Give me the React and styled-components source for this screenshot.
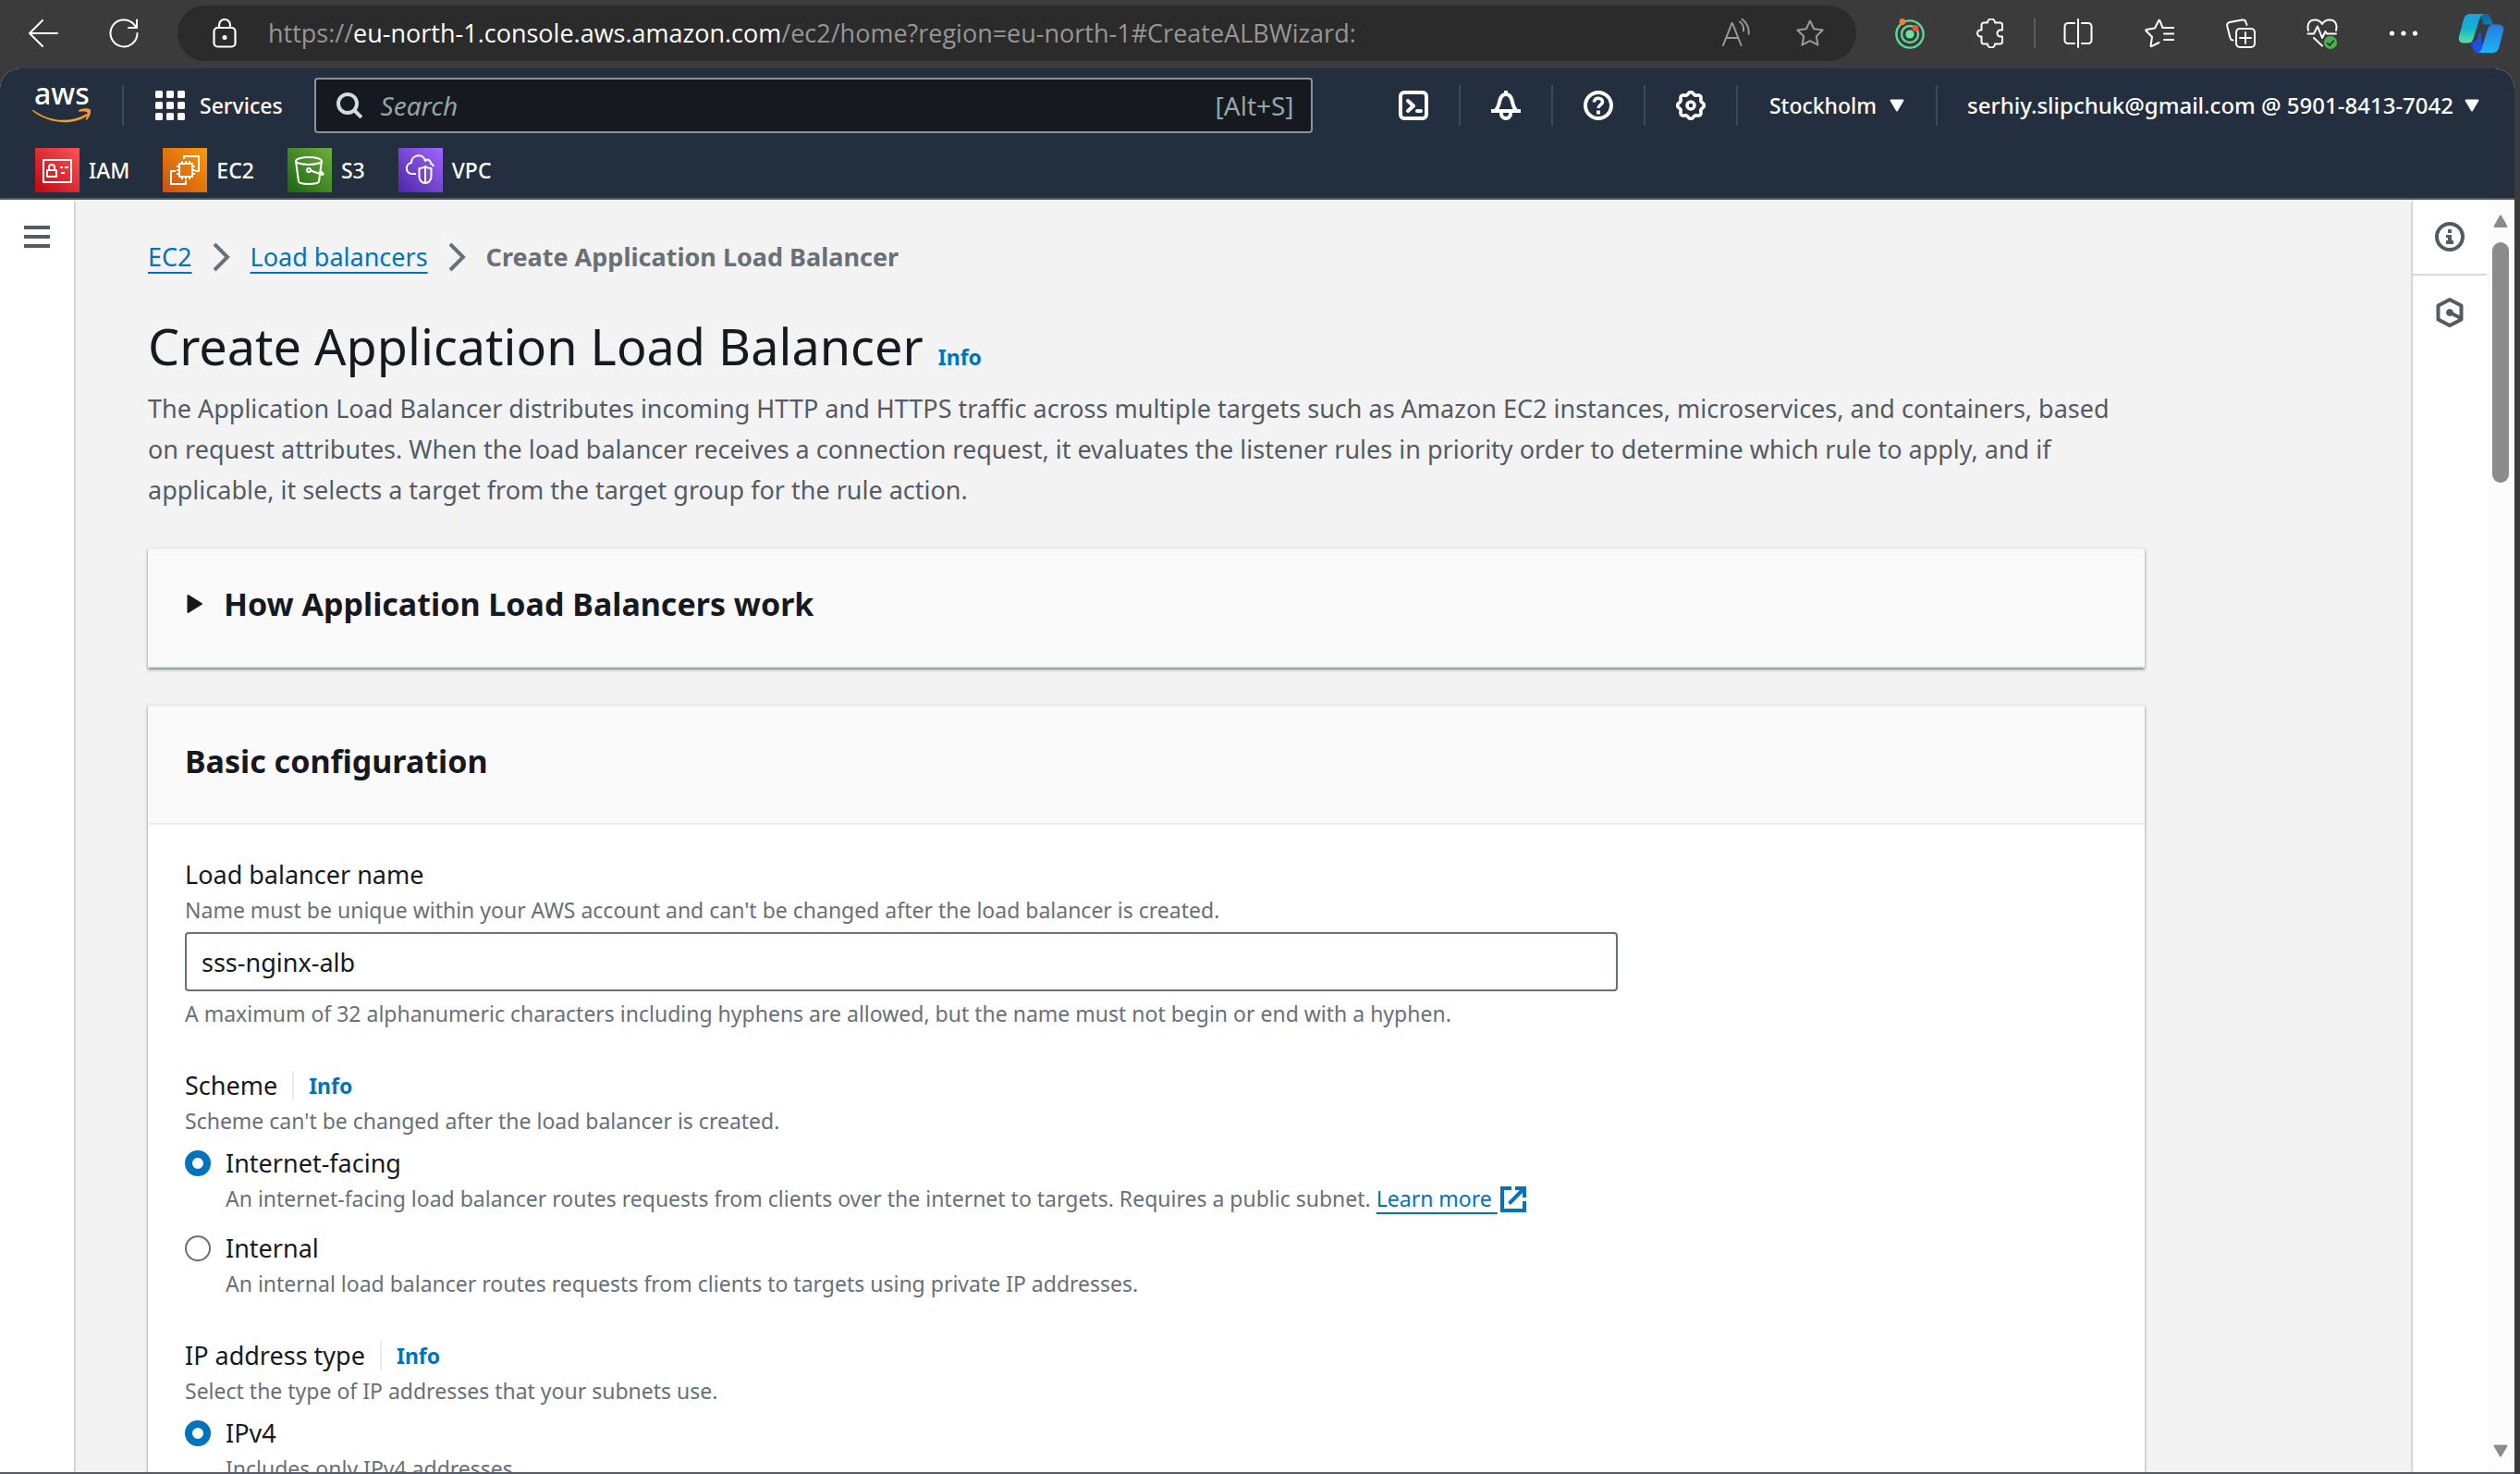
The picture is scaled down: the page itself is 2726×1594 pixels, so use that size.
import React, { useState } from "react";
import styled, { createGlobalStyle, css } from "styled-components";

const FONT = '"Noto Sans", "Open Sans", sans-serif';

const GlobalStyle = createGlobalStyle`
  *, *::before, *::after { box-sizing: border-box; }
  body { margin: 0; background: #3b3b3b; font-family: ${FONT}; overflow: hidden; }
  button, input { font-family: inherit; }
  h1, h2, p, ul, ol, fieldset, legend { margin: 0; padding: 0; border: 0; }
`;

/* ---------- Browser chrome ---------- */

const Shell = styled.div`
  height: 100vh;
  display: flex;
  flex-direction: column;
  background: #3b3b3b;
`;

const BrowserBar = styled.div`
  flex: none;
  display: flex;
  align-items: center;
  height: 74px;
  padding: 0 2px 2px 18px;
`;

const PlainButton = styled.button`
  display: flex;
  align-items: center;
  justify-content: center;
  padding: 0;
  border: 0;
  background: none;
  color: inherit;
  cursor: pointer;
`;

const ToolButton = styled(PlainButton)`
  flex: none;
  width: ${(p) => p.$w || 88}px;
  height: 60px;
  color: ${(p) => (p.$dim ? "#9a9a9a" : "#fff")};
`;

const AddressBar = styled.div`
  flex: 1;
  min-width: 0;
  display: flex;
  align-items: center;
  height: 60px;
  margin-right: 14px;
  padding: 0 10px 0 38px;
  border-radius: 30px;
  background: #2b2b2b;
  color: #fff;
`;

const Url = styled.div`
  flex: 1;
  min-width: 0;
  padding-left: 34px;
  overflow: hidden;
  white-space: nowrap;
  font-family: "Open Sans", "Noto Sans", sans-serif;
  font-size: 27px;
  line-height: 40px;
  color: #969696;
  b { color: #fff; font-weight: 400; }
`;

const BarDivider = styled.div`
  flex: none;
  width: 2px;
  height: 32px;
  margin: 0 2px;
  background: #5c5c5c;
`;

const Viewport = styled.div`
  flex: 1;
  min-height: 0;
  display: flex;
  flex-direction: column;
  margin-right: 6px;
  overflow: hidden;
  border-radius: 22px 22px 0 0;
  border-bottom: 2px solid #545b64;
  background: #f3f3f3;
`;

/* ---------- Console header ---------- */

const ConsoleHeader = styled.header`
  flex: none;
  background: #232f3e;
  border-bottom: 2px solid #545b64;
  color: #fff;
  font-size: 23px;
  line-height: 32px;
`;

const NavRow = styled.nav`
  display: flex;
  align-items: center;
  height: 80px;
  padding: 0 38px 0 34px;
`;

const NavDivider = styled.div`
  flex: none;
  width: 2px;
  height: 44px;
  background: #3e4856;
`;

const Logo = styled.a`
  flex: none;
  display: block;
  width: 98px;
  height: 72px;
`;

const NavButton = styled(PlainButton)`
  flex: none;
  gap: ${(p) => p.$gap || 14}px;
  height: 60px;
  padding: ${(p) => p.$pad || "0 34px"};
  font-size: ${(p) => p.$size || 23}px;
  font-weight: 500;
  line-height: 32px;
  white-space: nowrap;
`;

const SearchBox = styled.label`
  flex: 0 1 1080px;
  display: flex;
  align-items: center;
  height: 60px;
  margin-right: auto;
  padding: 0 18px 0 22px;
  border: 2px solid #879596;
  border-radius: 4px;
  background: #16191f;
  color: #95a5a6;
  font-size: 28px;
`;

const SearchInput = styled.input`
  flex: 1;
  min-width: 0;
  padding: 0 0 0 20px;
  border: 0;
  outline: 0;
  background: none;
  color: #fff;
  font-size: 28px;
  &::placeholder { color: #95a5a6; font-style: italic; opacity: 1; }
`;

const IconNavButton = styled(PlainButton)`
  flex: none;
  width: 98px;
  height: 60px;
`;

const Favourites = styled.ul`
  display: flex;
  gap: 36px;
  height: 60px;
  padding: 6px 38px 0;
  list-style: none;
`;

const Favourite = styled.a`
  display: flex;
  align-items: center;
  gap: 10px;
  height: 48px;
  color: #fff;
  font-weight: 500;
  text-decoration: none;
  svg { display: block; }
`;

/* ---------- Page frame ---------- */

const Frame = styled.div`
  flex: 1;
  min-height: 0;
  display: flex;
`;

const Rail = styled.aside`
  flex: none;
  width: ${(p) => p.$w}px;
  z-index: 1;
  background: #fff;
  box-shadow: 0 2px 3px rgba(0, 28, 36, 0.45);
`;

const RailButton = styled(PlainButton)`
  width: 100%;
  height: 80px;
  color: #545b64;
  & + & { border-top: 2px solid #d5dbdb; height: 82px; }
`;

const Main = styled.main`
  flex: 1;
  min-width: 0;
  padding: 40px 80px 0;
  overflow: hidden;
  background: #f3f3f3;
`;

const Column = styled.div`
  max-width: 2160px;
`;

const ScrollTrack = styled.div`
  flex: none;
  display: flex;
  flex-direction: column;
  align-items: center;
  width: 30px;
  padding: 16px 0;
  z-index: 2;
  background: #fcfcfc;
`;

const ScrollThumb = styled.div`
  width: 18px;
  height: 260px;
  margin: 16px 0 auto;
  border-radius: 9px;
  background: #8b8b8b;
`;

/* ---------- Content ---------- */

const Crumbs = styled.ol`
  display: flex;
  align-items: center;
  gap: 22px;
  list-style: none;
  font-size: 27px;
  line-height: 44px;
  color: #687078;
  li { display: flex; align-items: center; gap: 22px; }
  strong { font-weight: 700; }
`;

const linkStyle = css`
  color: #0073bb;
  text-decoration: underline;
  text-decoration-thickness: 2px;
  text-underline-offset: 6px;
`;

const Link = styled.a`
  ${linkStyle}
`;

const PageTitle = styled.div`
  display: flex;
  align-items: baseline;
  gap: 16px;
  padding-top: 34px;
`;

const H1 = styled.h1`
  font-size: 54px;
  font-weight: 400;
  line-height: 80px;
  color: #16191f;
`;

const InfoLink = styled.a`
  color: #0073bb;
  font-size: 23px;
  font-weight: 700;
  line-height: 32px;
  text-decoration: none;
`;

const Intro = styled.p`
  padding: 6px 20px 40px 0;
  font-size: 27px;
  line-height: 44px;
  color: #545b64;
`;

const Card = styled.section`
  margin-bottom: 40px;
  background: #fff;
  border-top: 2px solid #eaeded;
  box-shadow: 0 2px 3px rgba(0, 28, 36, 0.5);
`;

const CardHeader = styled.div`
  display: flex;
  align-items: center;
  height: 128px;
  padding: 0 40px 8px;
  background: #fafafa;
  border-bottom: 2px solid #eaeded;
`;

const CardTitle = styled.h2`
  font-size: 34px;
  font-weight: 700;
  line-height: 44px;
  color: #16191f;
`;

const ExpandButton = styled(PlainButton)`
  gap: 22px;
  padding-left: 2px;
  color: #16191f;
`;

const Form = styled.form`
  display: flex;
  flex-direction: column;
  gap: 40px;
  padding: 32px 40px 40px;
`;

const Field = styled.div`
  display: flex;
  flex-direction: column;
`;

const LabelRow = styled.div`
  display: flex;
  align-items: center;
  font-size: 27px;
  line-height: 44px;
  color: #16191f;
  ${InfoLink} {
    margin-left: 16px;
    padding-left: 16px;
    border-left: 2px solid #eaeded;
  }
`;

const Hint = styled.p`
  font-size: 23px;
  line-height: 32px;
  color: #687078;
`;

const TextInput = styled.input`
  width: calc(75% - 10px);
  height: 64px;
  margin: 8px 0;
  padding: 0 16px;
  border: 2px solid #687078;
  border-radius: 4px;
  outline: 0;
  background: #fff;
  color: #16191f;
  font-size: 27px;
`;

const Options = styled.div`
  display: flex;
  flex-direction: column;
  gap: 16px;
  padding-top: 8px;
`;

const Option = styled.label`
  display: grid;
  grid-template-columns: 28px 1fr;
  column-gap: 16px;
  align-items: center;
  font-size: 27px;
  line-height: 44px;
  color: #16191f;
  ${Hint} { grid-column: 2; }
`;

const Radio = styled.input`
  appearance: none;
  width: 28px;
  height: 28px;
  margin: 0;
  border: 2px solid #687078;
  border-radius: 50%;
  background: #fff;
  &:checked { border: 8px solid #0073bb; }
`;

const ExternalLink = styled.a`
  ${linkStyle}
  svg { vertical-align: -6px; margin-left: 3px; }
`;

/* ---------- Icons ---------- */

const Svg = ({ s = 32, w, h, box = 32, sw = 2, children, ...rest }) => (
  <svg width={w || s} height={h || s} viewBox={`0 0 ${box} ${box}`} fill="none" stroke="currentColor"
    strokeWidth={sw} strokeLinecap="round" strokeLinejoin="round" aria-hidden="true" {...rest}>
    {children}
  </svg>
);

const BackIcon = () => <Svg><path d="M31 16H1M15 2 1 16l14 14" /></Svg>;
const ReloadIcon = () => <Svg><path d="M30.500 16A14.500 14.500 0 1 1 26.300 5.700L30 10M30 1.500V10h-9" strokeLinejoin="miter" /></Svg>;
const LockIcon = () => (
  <Svg w={26} h={32} viewBox="0 0 26 32" sw={2.2}>
    <rect x="1.500" y="10" width="23" height="20.500" rx="4" /><path d="M7 10V7a6 6 0 0 1 12 0v3" />
    <circle cx="13" cy="20.500" r="1.400" fill="currentColor" />
  </Svg>
);
const ReadAloudIcon = () => (
  <Svg><path d="M2 29 11.500 5h.5l9.500 24M5.500 21H18M20 3.500c3 2 4.500 6 4 10M22.500.8c5 3.500 8 10 7 16" /></Svg>
);
const STAR = "M16 2.500l4.200 8.700 9.500 1.300-6.900 6.700 1.700 9.500-8.500-4.500-8.500 4.500 1.700-9.500-6.900-6.700 9.500-1.300z";
const StarIcon = () => <Svg><path d={STAR} /></Svg>;
const TargetIcon = () => (
  <svg width="32" height="34" viewBox="0 0 32 34" fill="none" aria-hidden="true">
    <circle cx="16" cy="18" r="14.600" stroke="#5fd896" strokeWidth="2.400" />
    <circle cx="16" cy="18" r="9" stroke="#5fd896" strokeWidth="2.400" />
    <circle cx="16" cy="18" r="4.600" fill="#69e69f" />
    <circle cx="8" cy="4.500" r="3.400" fill="#ef7d32" /><circle cx="22" cy="11.500" r="3.400" fill="#e9562f" />
  </svg>
);
const PuzzleIcon = () => (
  <Svg><path d="M12 4.500a4 4 0 0 1 8 0h5.500A2.500 2.500 0 0 1 28 7v5.500h-2a3.500 3.500 0 0 0 0 7h2V25a2.500 2.500 0 0 1-2.500 2.500H20a4 4 0 0 1-8 0H8A2.500 2.500 0 0 1 5.500 25v-5.500h-1a3.500 3.500 0 0 1 0-7h1V7A2.500 2.500 0 0 1 8 4.500z" /></Svg>
);
const SplitIcon = () => (
  <Svg><path d="M16 1v30M12 5H5a3.500 3.500 0 0 0-3.500 3.500v15A3.500 3.500 0 0 0 5 27h7M20 5h7a3.500 3.500 0 0 1 3.500 3.500v15A3.500 3.500 0 0 1 27 27h-7" /></Svg>
);
const FavListIcon = () => (
  <Svg><path d="M19.500 10 16.300 2.200q-.6-.9-1.200 0L11 10.500l-9.300 1.600q-.8.5-.2 1.200L8 20 6.500 29.500q.2 1 1 .6L15.500 26M21 10h10.500M21 16.500h10.500M21 23h10.500" /></Svg>
);
const CollectionsIcon = () => (
  <Svg><rect x="11" y="11" width="20" height="20" rx="4" /><path d="M21 15v12M15 21h12M22.500 7 21.500 4a3.500 3.500 0 0 0-4-2.500L4 4A3.500 3.500 0 0 0 1.200 8l3.300 13a3.500 3.500 0 0 0 3 2.500" /></Svg>
);
const HeartIcon = () => (
  <svg width="34" height="34" viewBox="0 0 34 34" fill="none" stroke="#fff" strokeWidth="2" strokeLinecap="round" strokeLinejoin="round" aria-hidden="true">
    <path d="M2 14C0 6 4 2.500 9 2.500c4 0 6.500 2 8 4.500 1.500-2.500 4-4.500 8-4.500 5 0 9 3.500 7 11.500M1.500 17.500H8l4-8 5 12.500 3.500-7 1.500 2.500h10M8 22l9 8.500" />
    <circle cx="26" cy="27" r="7" fill="#4caf50" stroke="none" /><path d="m22.500 27.500 2.500 2.500 4.500-5" stroke="#1e2b1f" strokeWidth="1.600" />
  </svg>
);
const DotsIcon = () => (
  <Svg><g fill="currentColor" stroke="none"><circle cx="3.500" cy="16" r="2.600" /><circle cx="16" cy="16" r="2.600" /><circle cx="28.500" cy="16" r="2.600" /></g></Svg>
);
const CopilotIcon = () => (
  <svg width="50" height="44" viewBox="0 0 50 44" aria-hidden="true">
    <defs>
      <linearGradient id="cpA" x1="0" y1="0" x2="0" y2="1"><stop offset="0" stopColor="#1f9fe0" /><stop offset=".5" stopColor="#12b3cf" /><stop offset="1" stopColor="#5be39a" /></linearGradient>
      <linearGradient id="cpB" x1="0" y1="0" x2="0" y2="1"><stop offset="0" stopColor="#2b79dd" /><stop offset="1" stopColor="#1cb4f8" /></linearGradient>
      <linearGradient id="cpC" x1="0" y1="0" x2="1" y2="1"><stop offset="0" stopColor="#0b5f96" /><stop offset="1" stopColor="#0f86c8" /></linearGradient>
    </defs>
    <path d="M24 1h6c3 0 4.500 2 5.500 5l1.500 4.500c.6 1.500 1.800 2 3 2H27z" fill="url(#cpC)" />
    <path d="M1 32h13c3 0 6-2 7-5l3-9 3 22c-.8 2-4 3-6 3-3 0-4-2-5-5l-1.500-4c-.6-1.500-1.500-2-3.500-2z" fill="#1f4fe0" />
    <path d="M13 1h17c-4 0-6 3-7 6l-6.500 21c-1 3-3 4.500-6 4.500H6c-4 0-6-3-5-7L6 7c1-4 4-6 7-6z" fill="url(#cpA)" />
    <path d="M37 43H20c4 0 5-3 6-6l6-19.500c1-3 3-5 6-5h6c4 0 6 3 5 7l-4.500 17C43.500 41 41 43 37 43z" fill="url(#cpB)" />
  </svg>
);

const AwsLogo = () => (
  <svg width="70" height="72" viewBox="0 -14 70 72" aria-hidden="true">
    <text x="3" y="21" fontFamily="Noto Sans, sans-serif" fontSize="32" fontWeight="500" fill="#fff">aws</text>
    <path d="M2 27c18 13 40 14 57 4.500 1.500-.8 2.500.6 1.200 1.700C44 45 17 41 1.500 28.300c-.8-.8-.2-1.800.5-1.300z" fill="#f79b2e" />
    <path d="M51 27.500c3-2.500 10-3 12.500-1.200 1.500 2-.3 8.500-3.500 11.200-.8.6-1.500.2-1.200-.5 1-2.500 2.200-6.500 1.400-7.800-1-1.200-5.500-.8-8-.5-1.200.1-1.800-.6-1.200-1.200z" fill="#f79b2e" />
  </svg>
);
const GridIcon = () => (
  <svg width="32" height="32" viewBox="0 0 32 32" fill="#fff" aria-hidden="true">
    {[0, 12, 24].map((y) => [0, 12, 24].map((x) => <rect key={`${x}-${y}`} x={x} y={y} width="8" height="8" rx="1.500" />))}
  </svg>
);
const SearchIcon = () => (
  <Svg s={28} box={28} sw={4} stroke="#d5dbdb" strokeLinecap="butt"><circle cx="12" cy="12" r="10" /><path d="m19 19 8 8" /></Svg>
);
const ShellIcon = () => (
  <Svg sw={4}><rect x="2" y="2" width="28" height="28" rx="4" /><path d="m10 11 6 5.500-6 5.500" /><path d="M20 22h4" /></Svg>
);
const BellIcon = () => (
  <Svg sw={4} strokeLinejoin="miter" strokeLinecap="butt"><path d="M0 22h32M3.500 22.500C8.500 19 8 15 9.500 10.500 10.500 6.500 13 4 16 4s5.500 2.500 6.500 6.500C24 15 23.500 19 28.500 22.500M16 0v4M11 22v3a5 5 0 0 0 10 0v-3" /></Svg>
);
const HelpIcon = () => (
  <Svg sw={4}><circle cx="16" cy="16" r="14" /><path d="M11.500 12.500c0-6 9.500-5.500 9 0-.3 3-4.500 3-4.500 6.500" strokeLinecap="butt" strokeWidth="3.500" /><path d="M16 21.500v4" strokeLinecap="butt" /></Svg>
);
/* Eight rounded teeth, traced as a wave around the centre of the icon. */
const GEAR_OUTLINE = `M${Array.from({ length: 96 }, (_, i) => {
  const a = (i / 96) * Math.PI * 2;
  const r = 13.2 + 1.3 * Math.cos(a * 8);
  return `${(16 + r * Math.sin(a)).toFixed(2)} ${(16 - r * Math.cos(a)).toFixed(2)}`;
}).join("L")}Z`;
const GearIcon = () => (
  <Svg sw={3.6}>
    <path d={GEAR_OUTLINE} />
    <circle cx="16" cy="16" r="4" sw={3.6} />
  </Svg>
);
const Caret = ({ dir = "down", w = 16, h = 14, color = "currentColor" }) => (
  <svg width={w} height={h} viewBox="0 0 16 14" aria-hidden="true">
    <path d={dir === "up" ? "M1.500 13 8 1.500 14.500 13z" : "M1.500 1.500h13L8 12.500z"} fill={color} stroke={color} strokeWidth="2" strokeLinejoin="round" />
  </svg>
);
const RightCaret = () => (
  <svg width="18" height="22" viewBox="0 0 18 22" aria-hidden="true"><path d="M1.500 2 16 11 1.500 20z" fill="#16191f" stroke="#16191f" strokeWidth="2" strokeLinejoin="round" /></svg>
);
const ChevronIcon = () => (
  <svg width="19" height="32" viewBox="0 0 19 32" fill="none" stroke="#687078" strokeWidth="4" aria-hidden="true"><path d="M2 2l14 14L2 30" /></svg>
);
const MenuIcon = () => (
  <svg width="28" height="24" viewBox="0 0 28 24" fill="#545b64" aria-hidden="true"><path d="M0 0h28v4H0zM0 10h28v4H0zM0 20h28v4H0z" /></svg>
);
const InfoIcon = () => (
  <Svg sw={4}><circle cx="16" cy="16" r="14" /><path d="M14 8h4v4h-4zM12 14h6v6h2v4h-8v-4h2v-3h-2z" fill="currentColor" stroke="none" /></Svg>
);
const HexIcon = () => (
  <Svg sw={4}><path d="M16 2 28.500 8.500v15L16 30 3.500 23.500v-15z" /><path d="m16 16 12 6" /><circle cx="16" cy="16" r="3.500" fill="currentColor" strokeWidth="1" /></Svg>
);
const ExternalIcon = () => (
  <svg width="28" height="28" viewBox="0 0 28 28" fill="none" stroke="#0073bb" strokeWidth="4" aria-hidden="true">
    <path d="M12 2H2v24h24V16M16 2h10v10M26 2 9.500 18.500" />
  </svg>
);

const ServiceTile = ({ id, from, to, children }) => (
  <svg width="48" height="48" viewBox="0 0 48 48" fill="none" stroke="#fff" strokeWidth="2" strokeLinejoin="round" aria-hidden="true">
    <defs><linearGradient id={id} x1="0" y1="1" x2="1" y2="0"><stop offset="0" stopColor={from} /><stop offset="1" stopColor={to} /></linearGradient></defs>
    <rect width="48" height="48" fill={`url(#${id})`} stroke="none" />
    {children}
  </svg>
);

const services = [
  { name: "IAM", from: "#bd0816", to: "#ff5252", art: (
    <><path d="M9 13h30v24H9z" /><path d="M13 24h10v7H13zM15 24v-3a3 3 0 0 1 6 0v3M27 21h3M32 21h4M28 27h4" /></>
  ) },
  { name: "EC2", from: "#c8511b", to: "#ff9900", art: (
    <><path d="M18 17h14v14H18zM21 14v3M25 14v3M29 14v3M21 31v3M25 31v3M29 31v3M15 20h3M15 24h3M15 28h3M32 20h3M32 24h3M32 28h3" /><path d="M23 12V9h16v16h-4M14 25H9v14h16v-4" /></>
  ) },
  { name: "S3", from: "#1b660f", to: "#6cae3e", art: (
    <><ellipse cx="23" cy="14" rx="14" ry="4" /><path d="m9 14 3 22c0 4 22 4 22 0l3-22" /><circle cx="23" cy="24" r="2" /><path d="M25 24.500 38 29c2-1-1-3-2-3.500" /></>
  ) },
  { name: "VPC", from: "#4d27a8", to: "#a166ff", art: (
    <><path d="M19 28h-4c-8 0-8-11-1-12C14 7 27 5 29 14c3-3 6-.5 6 3 1.500.2 2.500 1 3 3" /><path d="M29 20c3 2 4 2 6.500 2v9c0 4-3 7-6.500 7s-6.500-3-6.500-7v-9c2.500 0 3.500 0 6.500-2zM29 20v18" /></>
  ) },
];

const navIcons = [
  ["CloudShell", ShellIcon],
  ["Notifications", BellIcon],
  ["Help", HelpIcon],
  ["Settings", GearIcon],
];

const barIcons = [
  ["Split screen", SplitIcon],
  ["Favorites", FavListIcon],
  ["Collections", CollectionsIcon],
  ["Browser essentials", HeartIcon],
  ["More", DotsIcon],
];

const RadioOption = ({ name, value, current, onPick, label, children }) => (
  <Option>
    <Radio type="radio" name={name} value={value} checked={current === value} onChange={() => onPick(value)} />
    <span>{label}</span>
    <Hint as="span">{children}</Hint>
  </Option>
);

export default function App() {
  const [name, setName] = useState("sss-nginx-alb");
  const [scheme, setScheme] = useState("internet-facing");
  const [ipType, setIpType] = useState("ipv4");

  return (
    <Shell>
      <GlobalStyle />
      <BrowserBar>
        <ToolButton $w={58} aria-label="Back"><BackIcon /></ToolButton>
        <ToolButton $w={116} aria-label="Refresh"><ReloadIcon /></ToolButton>
        <AddressBar>
          <LockIcon />
          <Url>https://<b>eu-north-1.console.aws.amazon.com</b>/ec2/home?region=eu-north-1#CreateALBWizard:</Url>
          <ToolButton $w={80} $dim aria-label="Read aloud"><ReadAloudIcon /></ToolButton>
          <ToolButton $w={80} $dim aria-label="Add to favorites"><StarIcon /></ToolButton>
        </AddressBar>
        <ToolButton aria-label="Extension"><TargetIcon /></ToolButton>
        <ToolButton aria-label="Extensions"><PuzzleIcon /></ToolButton>
        <BarDivider />
        {barIcons.map(([label, Icon]) => (
          <ToolButton key={label} aria-label={label}><Icon /></ToolButton>
        ))}
        <ToolButton $w={80} aria-label="Copilot"><CopilotIcon /></ToolButton>
      </BrowserBar>

      <Viewport>
        <ConsoleHeader>
          <NavRow>
            <Logo href="#home" aria-label="AWS"><AwsLogo /></Logo>
            <NavDivider />
            <NavButton $gap={16}><GridIcon />Services</NavButton>
            <SearchBox>
              <SearchIcon />
              <SearchInput type="text" placeholder="Search" aria-label="Search" />
              <span>[Alt+S]</span>
            </SearchBox>
            {navIcons.map(([label, Icon]) => (
              <React.Fragment key={label}>
                <IconNavButton aria-label={label}><Icon /></IconNavButton>
                <NavDivider />
              </React.Fragment>
            ))}
            <NavButton>Stockholm<Caret /></NavButton>
            <NavDivider />
            <NavButton $pad="0 0 0 32px" $gap={12} $size={24}>serhiy.slipchuk@gmail.com @ 5901-8413-7042<Caret /></NavButton>
          </NavRow>
          <Favourites>
            {services.map((s) => (
              <li key={s.name}>
                <Favourite href={`#${s.name}`}>
                  <ServiceTile id={`tile-${s.name}`} from={s.from} to={s.to}>{s.art}</ServiceTile>
                  {s.name}
                </Favourite>
              </li>
            ))}
          </Favourites>
        </ConsoleHeader>

        <Frame>
          <Rail $w={80}>
            <RailButton aria-label="Open navigation"><MenuIcon /></RailButton>
          </Rail>

          <Main>
            <Column>
              <Crumbs>
                <li><Link href="#ec2">EC2</Link><ChevronIcon /></li>
                <li><Link href="#lbs">Load balancers</Link><ChevronIcon /></li>
                <li><strong>Create Application Load Balancer</strong></li>
              </Crumbs>

              <PageTitle>
                <H1>Create Application Load Balancer</H1>
                <InfoLink href="#info">Info</InfoLink>
              </PageTitle>
              <Intro>
                The Application Load Balancer distributes incoming HTTP and HTTPS traffic across multiple targets such as
                Amazon EC2 instances, microservices, and containers, based on request attributes. When the load balancer
                receives a connection request, it evaluates the listener rules in priority order to determine which rule to
                apply, and if applicable, it selects a target from the target group for the rule action.
              </Intro>

              <Card>
                <CardHeader>
                  <ExpandButton aria-expanded="false">
                    <RightCaret />
                    <CardTitle as="span">How Application Load Balancers work</CardTitle>
                  </ExpandButton>
                </CardHeader>
              </Card>

              <Card>
                <CardHeader><CardTitle>Basic configuration</CardTitle></CardHeader>
                <Form onSubmit={(e) => e.preventDefault()}>
                  <Field>
                    <LabelRow as="label" htmlFor="lb-name">Load balancer name</LabelRow>
                    <Hint>Name must be unique within your AWS account and can't be changed after the load balancer is created.</Hint>
                    <TextInput id="lb-name" type="text" value={name} onChange={(e) => setName(e.target.value)} />
                    <Hint>A maximum of 32 alphanumeric characters including hyphens are allowed, but the name must not begin or end with a hyphen.</Hint>
                  </Field>

                  <Field role="radiogroup" aria-labelledby="scheme-label">
                    <LabelRow><span id="scheme-label">Scheme</span><InfoLink href="#scheme-info">Info</InfoLink></LabelRow>
                    <Hint>Scheme can't be changed after the load balancer is created.</Hint>
                    <Options>
                      <RadioOption name="scheme" value="internet-facing" current={scheme} onPick={setScheme} label="Internet-facing">
                        An internet-facing load balancer routes requests from clients over the internet to targets. Requires a public subnet.{" "}
                        <ExternalLink href="#learn-more">Learn more <ExternalIcon /></ExternalLink>
                      </RadioOption>
                      <RadioOption name="scheme" value="internal" current={scheme} onPick={setScheme} label="Internal">
                        An internal load balancer routes requests from clients to targets using private IP addresses.
                      </RadioOption>
                    </Options>
                  </Field>

                  <Field role="radiogroup" aria-labelledby="ip-label">
                    <LabelRow><span id="ip-label">IP address type</span><InfoLink href="#ip-info">Info</InfoLink></LabelRow>
                    <Hint>Select the type of IP addresses that your subnets use.</Hint>
                    <Options>
                      <RadioOption name="ip" value="ipv4" current={ipType} onPick={setIpType} label="IPv4">
                        Includes only IPv4 addresses.
                      </RadioOption>
                    </Options>
                  </Field>
                </Form>
              </Card>
            </Column>
          </Main>

          <Rail $w={80}>
            <RailButton aria-label="Info panel"><InfoIcon /></RailButton>
            <RailButton aria-label="Diagnostics"><HexIcon /></RailButton>
          </Rail>
          <ScrollTrack>
            <Caret dir="up" w={18} h={14} color="#8b8b8b" />
            <ScrollThumb />
            <Caret w={18} h={14} color="#8b8b8b" />
          </ScrollTrack>
        </Frame>
      </Viewport>
    </Shell>
  );
}
